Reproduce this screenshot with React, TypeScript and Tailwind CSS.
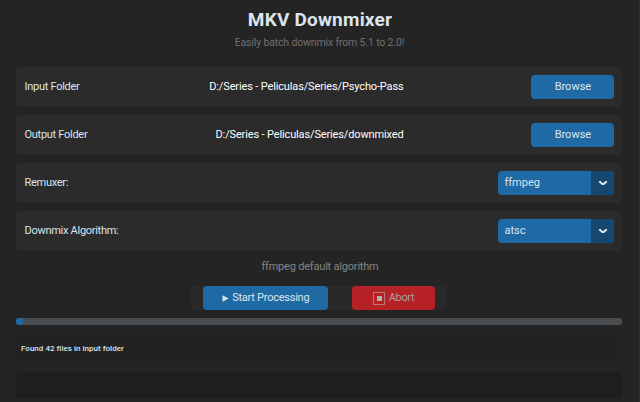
import type { ReactNode } from "react";

function Row({ label, children }: { label: string; children: ReactNode }) {
  return (
    <div className="flex h-10 items-center rounded-[4px] bg-[#2b2b2b] pr-[7.6px] pl-[8.5px]">
      <span className="w-[130px] shrink-0 tracking-[-0.28px] text-[#dce4ee]">{label}</span>
      {children}
    </div>
  );
}

function FolderRow({ label, path }: { label: string; path: string }) {
  return (
    <Row label={label}>
      <span className="w-[249px] text-right tracking-[-0.14px] text-white">{path}</span>
      <button className="ml-auto h-6 w-[83px] rounded-[4px] bg-[#1f6aa5] text-[#dce4ee]">
        Browse
      </button>
    </Row>
  );
}

function SelectRow({ label, value }: { label: string; value: string }) {
  return (
    <Row label={label}>
      <button className="ml-auto flex h-6 w-[116px] overflow-hidden rounded-[4px] bg-[#1f6aa5] text-left leading-6 text-[#dce4ee]">
        <span className="flex-1 pl-[6px]">{value}</span>
        <span className="flex w-[23.5px] items-center justify-center bg-[#144870]">
          <svg width="10" height="6" viewBox="0 0 10 6" fill="none">
            <path d="M1.8 1.8 L3.8 3.6 Q5 4.4 6.2 3.6 L8.2 1.8" stroke="#dce4ee" strokeWidth="2" strokeLinecap="round" strokeLinejoin="round" />
          </svg>
        </span>
      </button>
    </Row>
  );
}

export default function App() {
  return (
    <div className="flex h-[402px] w-[640px] flex-col overflow-hidden border-r border-[#303030] bg-[#242424] pr-[17px] pl-4 font-['Roboto',sans-serif] text-[11px] leading-4">
      <h1 className="mt-2 h-6 pl-[2px] text-center text-[19px] leading-6 font-bold tracking-[0.2px] text-[#dce4ee]">MKV Downmixer</h1>
      <p className="mt-[3px] h-4 pl-px text-center text-[10.5px] tracking-[-0.15px] text-[#707070]">Easily batch downmix from 5.1 to 2.0!</p>
      <div className="mt-4 flex flex-col gap-2">
        <FolderRow label="Input Folder" path="D:/Series - Peliculas/Series/Psycho-Pass" />
        <FolderRow label="Output Folder" path="D:/Series - Peliculas/Series/downmixed" />
        <SelectRow label="Remuxer:" value="ffmpeg" />
        <SelectRow label="Downmix Algorithm:" value="atsc" />
      </div>
      <p className="mt-2 h-4 pl-[2px] text-center tracking-[-0.2px] text-[#858585]">ffmpeg default algorithm</p>
      <div className="mx-auto mt-[11px] flex h-6 w-64 shrink-0 justify-between rounded-[4px] bg-[#292929] px-3">
        <button className="flex h-6 w-[125px] items-center justify-center gap-[3.5px] rounded-[4px] bg-[#1f6aa5] tracking-[-0.25px] text-[#dce4ee]">
          <svg width="7" height="7" viewBox="0 0 7 7">
            <path d="M0.5 0.3 L6.7 3.5 L0.5 6.7 Z" fill="#dce4ee" />
          </svg>
          Start Processing
        </button>
        <button className="flex h-6 w-[83px] items-center justify-center gap-1 rounded-[4px] bg-[#b52124] tracking-[-0.3px] text-[#a99d9d]">
          <svg width="12" height="13" viewBox="0 0 12 13" fill="none">
            <rect x="0.5" y="0.5" width="11" height="12" stroke="#bc7772" />
            <rect x="4" y="4" width="5" height="5" fill="#a9b5a9" />
          </svg>
          Abort
        </button>
      </div>
      <div className="mt-2 h-[7px] shrink-0 overflow-hidden rounded-[3px] bg-[#4a4d50]">
        <div className="h-[7px] w-[7px] rounded-[2px] bg-[#1f6aa5]" />
      </div>
      <div className="mt-[11px] flex h-6 shrink-0 items-center rounded-[4px] bg-[#222222] pt-px pl-[5px] text-[8px] font-medium tracking-[0.02px] text-[#dce4ee]">
        Found 42 files in input folder
      </div>
      <div className="mt-3 h-[26px] shrink-0 rounded-[4px] bg-[#1e1e1e]" />
    </div>
  );
}
